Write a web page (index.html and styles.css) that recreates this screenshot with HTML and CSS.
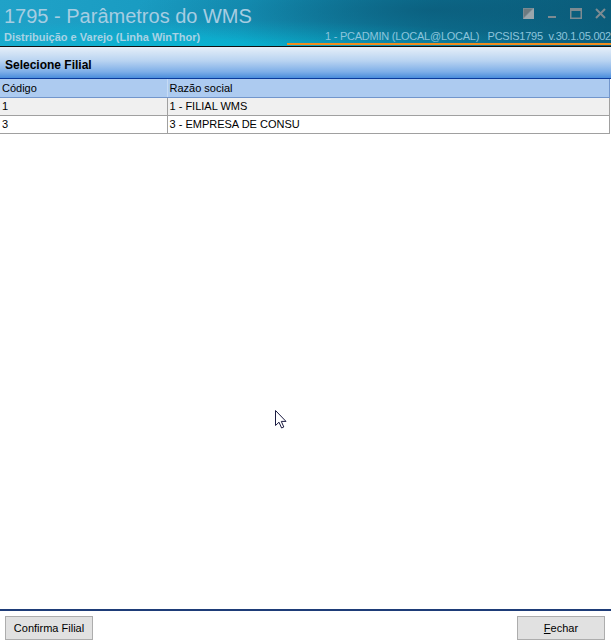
FILE: index.html
```html
<!DOCTYPE html>
<html lang="pt">
<head>
	<meta charset="UTF-8">
	<title>1795 - Parâmetros do WMS</title>
	<link rel="stylesheet" href="styles.css">
</head>
<body>
	<div class="window">
		<div class="titlebar">
			<div class="titles">
				<div class="title">1795 - Parâmetros do WMS</div>
				<div class="subtitle">Distribuição e Varejo (Linha WinThor)</div>
			</div>
			<div class="side">
				<div class="controls">
					<svg width="11" height="11" viewBox="0 0 11 11"><rect x="0" y="0" width="11" height="11" fill="#7a8a92"/><polygon points="11,0 11,11 0,11" fill="#9aa6ac"/><polygon points="1,1 9,1 1,9" fill="#6c7a80"/></svg>
					<svg width="8" height="11" viewBox="0 0 8 11"><rect x="0" y="8" width="8" height="2" fill="#7d8b92"/></svg>
					<svg width="12" height="11" viewBox="0 0 12 11"><rect x="0.75" y="0.75" width="10.5" height="9.5" fill="none" stroke="#7d8b92" stroke-width="1.5"/><rect x="0" y="0" width="12" height="3" fill="#7d8b92"/></svg>
					<svg width="11" height="11" viewBox="0 0 11 11"><path d="M1 1 L10 10 M10 1 L1 10" stroke="#7d8b92" stroke-width="2"/></svg>
				</div>
				<div class="info">1 - PCADMIN (LOCAL@LOCAL)&nbsp;&nbsp;&nbsp;PCSIS1795&nbsp;&nbsp;v.30.1.05.002</div>
				<div class="orange"></div>
			</div>
		</div>

		<div class="panel-title">Selecione Filial</div>

		<table class="grid">
			<thead>
				<tr><th class="col-code">Código</th><th>Razão social</th></tr>
			</thead>
			<tbody>
				<tr class="odd"><td class="col-code">1</td><td>1 - FILIAL WMS</td></tr>
				<tr><td class="col-code">3</td><td>3 - EMPRESA DE CONSU</td></tr>
			</tbody>
		</table>

		<div class="empty"></div>

		<div class="buttons">
			<button class="btn">Confirma Filial</button>
			<button class="btn"><u>F</u>echar</button>
		</div>

		<svg class="cursor" width="12" height="19" viewBox="0 0 12 19"><path d="M0.5 0.5 L0.5 15.5 L4 12.2 L6.6 18 L8.8 17 L6.3 11.4 L11 11.4 Z" fill="#fff" stroke="#1a1a40" stroke-width="1"/></svg>
	</div>
</body>
</html>
```

FILE: styles.css
```css
* {
	margin: 0;
	padding: 0;
	box-sizing: border-box;
}
html, body {
	width: 611px;
	height: 643px;
	overflow: hidden;
	background: #fff;
}
body {
	font-family: "Liberation Sans", Arial, sans-serif;
	font-size: 11px;
	color: #000;
}
.window {
	position: relative;
	height: 643px;
	display: flex;
	flex-direction: column;
}
.titlebar {
	height: 47px;
	display: flex;
	justify-content: space-between;
	border-bottom: 1px solid #101010;
	background:
		radial-gradient(ellipse 420px 60px at 430px 10px, rgba(10, 80, 110, 0.55), rgba(10, 80, 110, 0) 70%),
		radial-gradient(ellipse 500px 40px at 200px 48px, rgba(0, 200, 225, 0.6), rgba(0, 200, 225, 0) 70%),
		linear-gradient(100deg, #20a2c8 0%, #1597bd 40%, #0d7596 70%, #0a5e7c 100%);
	overflow: hidden;
}
.titles {
	padding: 5px 0 0 4px;
}
.title {
	font-size: 20px;
	line-height: 22px;
	color: #a6cde2;
}
.subtitle {
	margin-top: 4px;
	font-weight: bold;
	font-size: 11px;
	color: #a8d2e4;
}
.side {
	width: 324px;
	display: flex;
	flex-direction: column;
	align-items: flex-end;
}
.controls {
	display: flex;
	align-items: flex-start;
	gap: 13px;
	padding: 8px 5px 0 0;
	height: 30px;
}
.controls svg:nth-child(2) {
	margin-left: 1px;
	margin-right: 1px;
}
.info {
	color: #8cc4dc;
	white-space: nowrap;
	line-height: 12px;
	letter-spacing: -0.25px;
}
.orange {
	width: 324px;
	height: 2px;
	margin-top: 1px;
	background: #f08c1e;
}
.panel-title {
	height: 32px;
	padding: 11px 0 0 5px;
	font-weight: bold;
	font-size: 12px;
	background: linear-gradient(#e6eff9 0%, #b8d3f1 45%, #7eaee8 80%, #4a8ddc 100%);
	border-bottom: 1px solid #0b3a9c;
}
.grid {
	width: 610px;
	border-collapse: collapse;
	table-layout: fixed;
}
.grid th, .grid td {
	height: 18px;
	padding: 0 2px;
	text-align: left;
	font-weight: normal;
	white-space: nowrap;
	overflow: hidden;
}
.grid th {
	background: #adcbf0;
	border-right: 1px solid #c6dbf5;
	border-bottom: 1px solid #7296cc;
}
.grid th:last-child {
	border-right: 1px solid #7296cc;
}
.grid td {
	border-right: 1px solid #a0a0a0;
	border-bottom: 1px solid #a0a0a0;
	background: #fff;
}
.grid tr.odd td {
	background: #f0f0f0;
}
.grid .col-code {
	width: 167px;
}
.empty {
	flex: 1;
}
.buttons {
	height: 34px;
	border-top: 2px solid #1e3c78;
	display: flex;
	justify-content: space-between;
	align-items: flex-start;
	padding: 5px 6px 0 5px;
}
.btn {
	width: 88px;
	height: 24px;
	background: #e1e1e1;
	border: 1px solid #adadad;
	font-family: "Liberation Sans", Arial, sans-serif;
	font-size: 11px;
	color: #000;
}
.btn u {
	text-decoration: underline;
}
.cursor {
	position: absolute;
	left: 275px;
	top: 410px;
}
```
